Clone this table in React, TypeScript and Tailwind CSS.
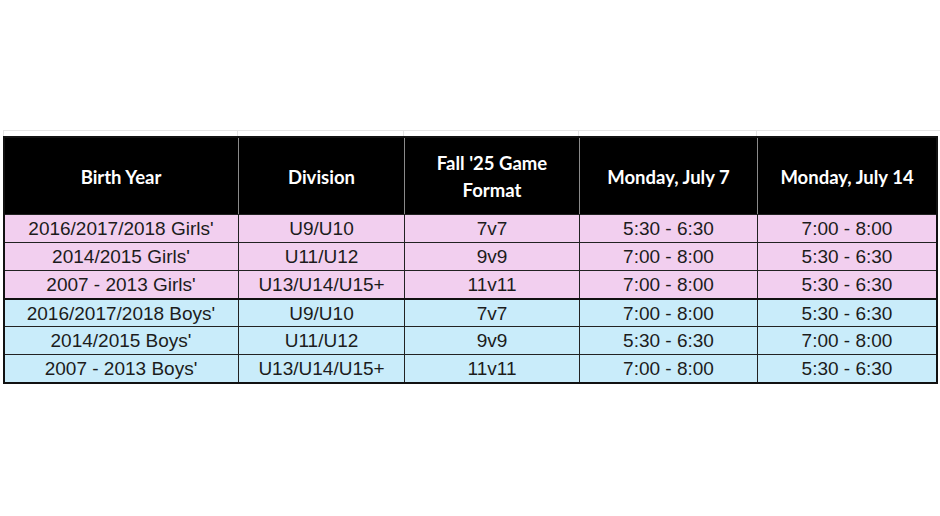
const cols = ['w-[234px]', 'w-[166px]', 'w-[175px]', 'w-[178px]', 'w-[179px]']

const rows = [
  { year: "2016/2017/2018 Girls'", div: 'U9/U10', fmt: '7v7', a: '5:30 - 6:30', b: '7:00 - 8:00', girl: true },
  { year: "2014/2015 Girls'", div: 'U11/U12', fmt: '9v9', a: '7:00 - 8:00', b: '5:30 - 6:30', girl: true },
  { year: "2007 - 2013 Girls'", div: 'U13/U14/U15+', fmt: '11v11', a: '7:00 - 8:00', b: '5:30 - 6:30', girl: true },
  { year: "2016/2017/2018 Boys'", div: 'U9/U10', fmt: '7v7', a: '7:00 - 8:00', b: '5:30 - 6:30', girl: false },
  { year: "2014/2015 Boys'", div: 'U11/U12', fmt: '9v9', a: '5:30 - 6:30', b: '7:00 - 8:00', girl: false },
  { year: "2007 - 2013 Boys'", div: 'U13/U14/U15+', fmt: '11v11', a: '7:00 - 8:00', b: '5:30 - 6:30', girl: false },
]

const headers = [
  ['Birth Year'],
  ['Division'],
  ["Fall '25 Game", 'Format'],
  ['Monday, July 7'],
  ['Monday, July 14'],
]

export default function App() {
  return (
    <div className="h-[516px] w-[940px] overflow-hidden bg-white pl-[3px] pt-[130px]">
      {/* faint sheet gridlines above the table */}
      <div className="flex h-[6px] border-t border-[#e4e4e4]">
        {cols.map((w, i) => (
          <div key={i} className={`${w} border-l border-[#e4e4e4]`} />
        ))}
      </div>
      <div className="inline-block border-2 border-[#111] [font-family:'Liberation_Sans',Arial,sans-serif]">
        <div className="flex h-[76px] bg-black text-white">
          {headers.map((h, i) => (
            <div
              key={i}
              className={`${cols[i]} flex flex-col items-center justify-center whitespace-nowrap pt-[2px] text-center text-[18.5px] leading-[27px] font-bold [font-family:Lato,'Open_Sans',sans-serif] ${i > 0 ? 'border-l border-[#8a8a8a]' : '-ml-px'}`}
            >
              {h.map((line) => (
                <span key={line}>{line}</span>
              ))}
            </div>
          ))}
        </div>
        {rows.map((r, ri) => (
          <div
            key={ri}
            className={`flex h-[28px] text-[19px] text-[#1c1c1c] ${r.girl ? 'bg-[#f2cfef]' : 'bg-[#c9ecfa]'} ${ri === 3 ? 'border-t-2 border-[#111]' : 'border-t border-[#222]'} ${ri === 5 ? 'h-[27px]' : ''}`}
          >
            {[r.year, r.div, r.fmt, r.a, r.b].map((t, i) => (
              <div
                key={i}
                className={`${cols[i]} flex items-center justify-center pt-[2px] ${i > 0 ? 'border-l border-[#222]' : '-ml-px'}`}
              >
                {t}
              </div>
            ))}
          </div>
        ))}
      </div>
    </div>
  )
}
